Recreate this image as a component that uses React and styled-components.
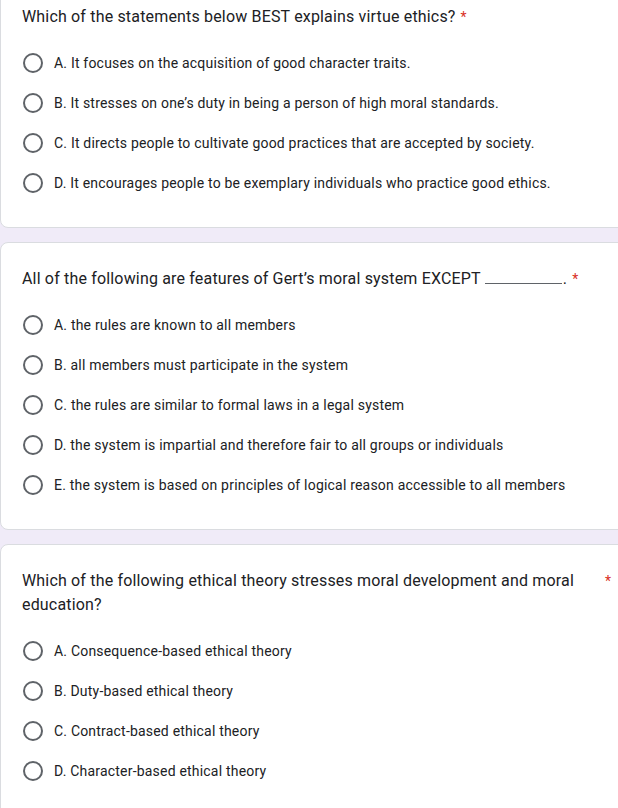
import React from "react";
import styled, { createGlobalStyle } from "styled-components";

const Global = createGlobalStyle`
  html, body { margin: 0; padding: 0; }
  body {
    background: #f0ebf8;
    overflow: hidden;
    font-family: Roboto, "Liberation Sans", Arial, sans-serif;
    color: #202124;
  }
`;

const Page = styled.div`
  width: 636px;
  margin-top: -20px;
  display: flex;
  flex-direction: column;
  gap: 14px;
`;

const Card = styled.div`
  background: #fff;
  border: 1px solid #dadce0;
  border-radius: 8px;
  padding: 24px 24px 24px 21px;
`;

const TitleRow = styled.div`
  display: flex;
  align-items: flex-start;
`;

const TitleText = styled.div`
  font-family: Roboto, "Liberation Sans", Arial, sans-serif;
  font-size: 16px;
  line-height: 24px;
  color: #202124;
  letter-spacing: 0.17px;
`;

const Required = styled.span`
  color: #d93025;
  font-size: 14px;
  line-height: 24px;
  padding-left: 5px;
  flex-shrink: 0;
`;

const Blank = styled.span`
  display: inline-block;
  width: 77px;
  border-bottom: 1px solid #5f6368;
  height: 16px;
  vertical-align: baseline;
  margin: 0 1px 0 4px;
`;

const Options = styled.div`
  margin-top: 14px;
  display: flex;
  flex-direction: column;
`;

const Option = styled.label`
  display: flex;
  align-items: center;
  height: 40px;
  gap: 11px;
  padding-left: 1px;
`;

const Radio = styled.span`
  width: 20px;
  height: 20px;
  box-sizing: border-box;
  border: 2px solid #5f6368;
  border-radius: 50%;
  flex-shrink: 0;
`;

const OptionText = styled.span`
  font-family: Roboto, "Liberation Sans", Arial, sans-serif;
  font-size: 14px;
  color: #202124;
  letter-spacing: 0.2px;
`;

const questions = [
  {
    title: "Which of the statements below BEST explains virtue ethics?",
    options: [
      "A. It focuses on the acquisition of good character traits.",
      "B. It stresses on one’s duty in being a person of high moral standards.",
      "C. It directs people to cultivate good practices that are accepted by society.",
      "D. It encourages people to be exemplary individuals who practice good ethics.",
    ],
  },
  {
    title: (
      <>
        All of the following are features of Gert’s moral system EXCEPT
        <Blank />.
      </>
    ),
    options: [
      "A. the rules are known to all members",
      "B. all members must participate in the system",
      "C. the rules are similar to formal laws in a legal system",
      "D. the system is impartial and therefore fair to all groups or individuals",
      "E. the system is based on principles of logical reason accessible to all members",
    ],
  },
  {
    title:
      "Which of the following ethical theory stresses moral development and moral education?",
    options: [
      "A. Consequence-based ethical theory",
      "B. Duty-based ethical theory",
      "C. Contract-based ethical theory",
      "D. Character-based ethical theory",
    ],
  },
];

export default function App() {
  return (
    <>
      <Global />
      <Page>
        {questions.map((q, i) => (
          <Card key={i}>
            <TitleRow>
              <TitleText>{q.title}</TitleText>
              <Required>*</Required>
            </TitleRow>
            <Options>
              {q.options.map((o) => (
                <Option key={o}>
                  <Radio />
                  <OptionText>{o}</OptionText>
                </Option>
              ))}
            </Options>
          </Card>
        ))}
      </Page>
    </>
  );
}
